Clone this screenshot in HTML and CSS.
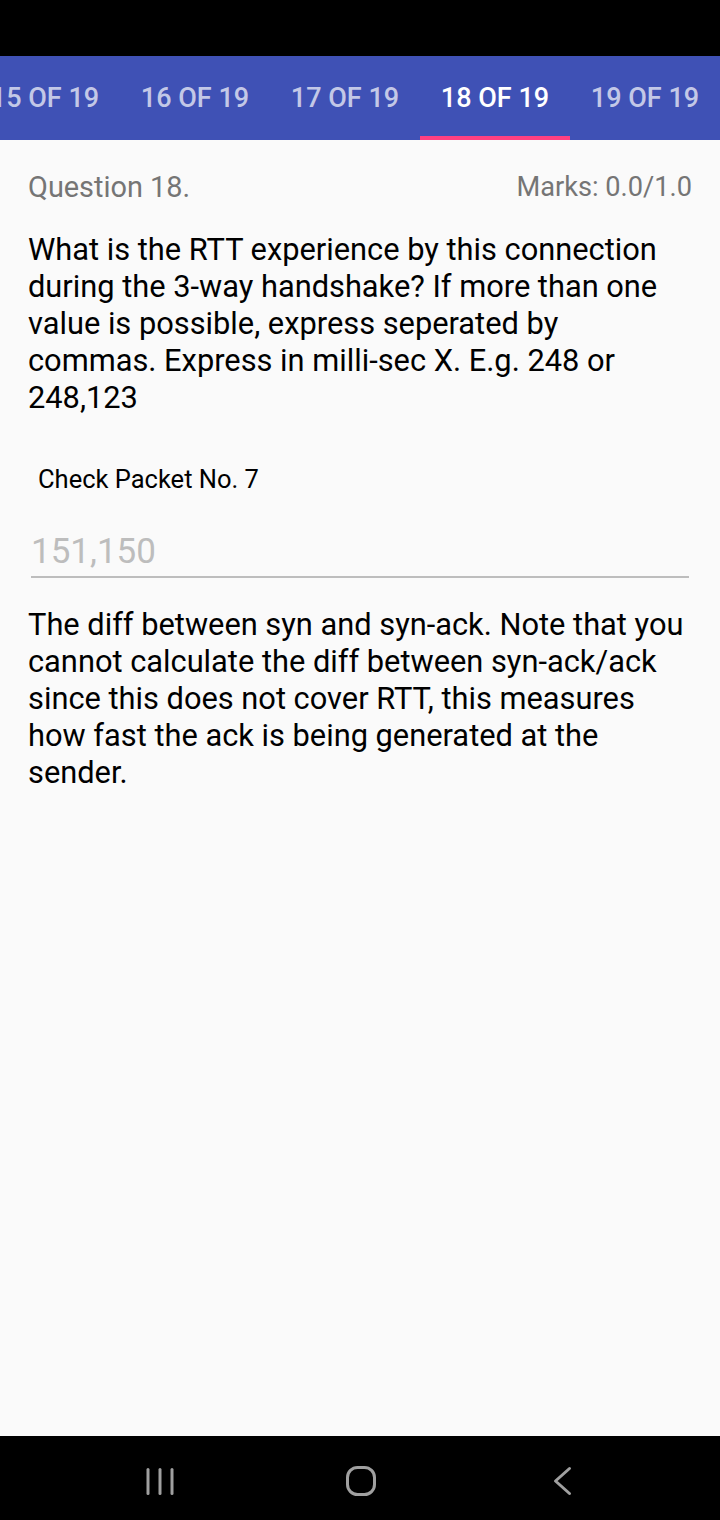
FILE: index.html
```html
<!DOCTYPE html>
<html>
<head>
<meta charset="utf-8">
<link rel="stylesheet" href="styles.css">
</head>
<body>
<div class="screen">
  <div class="statusbar"></div>
  <div class="tabs">
    <div class="tab">15 OF 19</div>
    <div class="tab">16 OF 19</div>
    <div class="tab">17 OF 19</div>
    <div class="tab active">18 OF 19</div>
    <div class="tab">19 OF 19</div>
  </div>
  <main class="content">
    <div class="header">
      <span class="qnum">Question 18.</span>
      <span class="marks">Marks: 0.0/1.0</span>
    </div>
    <p class="question">What is the RTT experience by this connection during the 3-way handshake? If more than one value is possible, express seperated by commas. Express in milli-sec X. E.g. 248 or 248,123</p>
    <p class="hint">Check Packet No. 7</p>
    <div class="field">151,150</div>
    <p class="answer">The diff between syn and syn-ack. Note that you cannot calculate the diff between syn-ack/ack since this does not cover RTT, this measures how fast the ack is being generated at the sender.</p>
  </main>
  <div class="navbar">
    <svg class="nav-icon" width="40" height="40" viewBox="0 0 40 40">
      <g stroke="#a0a0a0" stroke-width="3" stroke-linecap="round">
        <line x1="8" y1="8.5" x2="8" y2="32.5"/>
        <line x1="20" y1="8.5" x2="20" y2="32.5"/>
        <line x1="32" y1="8.5" x2="32" y2="32.5"/>
      </g>
    </svg>
    <svg class="nav-icon" width="40" height="40" viewBox="0 0 40 40">
      <rect x="6.5" y="6.5" width="27" height="27" rx="10" fill="none" stroke="#a0a0a0" stroke-width="3"/>
    </svg>
    <svg class="nav-icon" width="40" height="40" viewBox="0 0 40 40">
      <polyline points="27.5,7.5 13.5,20 27.5,32.5" fill="none" stroke="#a0a0a0" stroke-width="3" stroke-linecap="round" stroke-linejoin="round"/>
    </svg>
  </div>
</div>
</body>
</html>
```

FILE: styles.css
```css
* { box-sizing: border-box; }
html, body { margin: 0; padding: 0; }
body {
  width: 720px;
  height: 1520px;
  font-family: Roboto, "Noto Sans", sans-serif;
  background: #fafafa;
  overflow: hidden;
}
.screen {
  display: flex;
  flex-direction: column;
  height: 1520px;
}
.statusbar {
  height: 56px;
  background: #000;
  flex: none;
}
.tabs {
  height: 84px;
  background: #3f51b5;
  display: flex;
  flex: none;
  margin-left: -30px;
}
.tab {
  width: 150px;
  flex: none;
  display: flex;
  align-items: center;
  justify-content: center;
  color: rgba(255,255,255,0.7);
  font-size: 27px;
  font-weight: 500;
  border-bottom: 4px solid transparent;
  padding-top: 4px;
  white-space: nowrap;
}
.tab.active {
  color: #fff;
  border-bottom-color: #ff4081;
}
.content {
  flex: 1;
  padding: 29px 30px 0 28px;
}
.header {
  display: flex;
  justify-content: space-between;
  align-items: center;
  color: #757575;
  line-height: 36px;
  margin-right: -2px;
}
.qnum { font-size: 28.9px; }
.marks { font-size: 27.2px; }
.question {
  margin: 26px 0 0 0;
  font-size: 30.8px;
  line-height: 37px;
  color: #000;
}
.hint {
  margin: 48px 0 0 10px;
  font-size: 25.5px;
  line-height: 30px;
  color: #000;
}
.field {
  margin: 38px 1px 0 3px;
  font-size: 35px;
  line-height: 40px;
  color: #bdbdbd;
  padding-bottom: 4px;
  border-bottom: 2px solid #bdbdbd;
}
.answer {
  margin: 28px 0 0 0;
  font-size: 30.8px;
  line-height: 37px;
  color: #000;
}
.navbar {
  height: 84px;
  background: #000;
  flex: none;
  display: flex;
  justify-content: space-between;
  align-items: center;
  padding: 6px 138px 0 140px;
}
.nav-icon { display: block; }
```
